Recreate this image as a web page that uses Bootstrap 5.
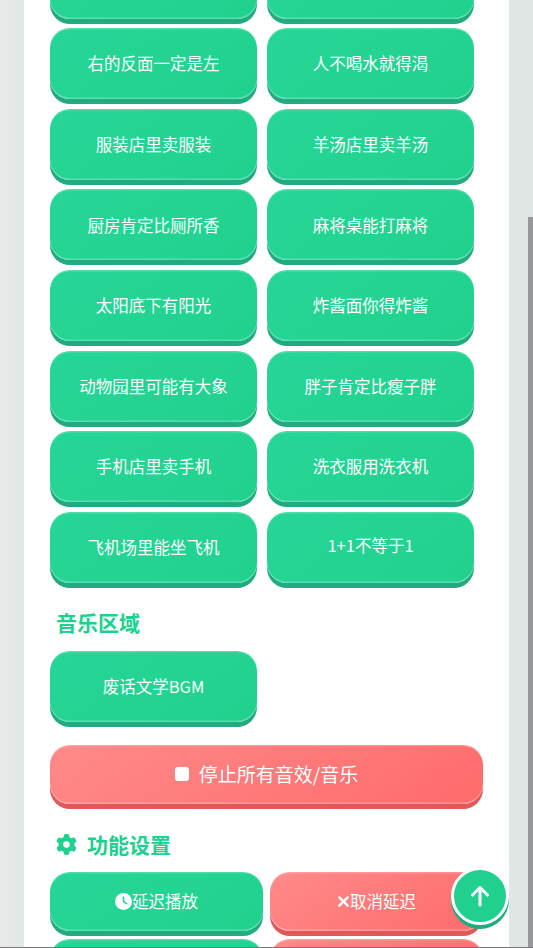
<!DOCTYPE html>
<html lang="zh">
<head>
<meta charset="utf-8">
<title>废话文学</title>
<link href="https://cdn.jsdelivr.net/npm/bootstrap@5.3.0/dist/css/bootstrap.min.css" rel="stylesheet">
<style>
html,body{height:100%;overflow:hidden}
body{background:linear-gradient(90deg,#e8eaea,#e2e8e5 24px,#e0e7e4);font-family:"Noto Sans CJK SC","Noto Sans",sans-serif;color:#fff}
.sheet{background:#fff;margin:-52.3px 24px 0 24px;padding:0 26px;width:485px;height:1100px}
.snd-grid{display:grid;grid-template-columns:207px 207px;gap:9.6px 10px;}
.press{display:flex;align-items:center;justify-content:center;height:71px;border:0;border-radius:20px;color:#fff;font-size:16.5px;padding:0;
 background:linear-gradient(145deg,#25d697,#20d18e);
 box-shadow:0 5px 0 #22aa80,inset 0 -1.5px 0 rgba(255,255,255,.25),inset 0 1.5px 0 rgba(255,255,255,.2)}
.press-up{padding:0 0 3px}
.press-red{background:linear-gradient(145deg,#ff8a8a,#ff6b6b);box-shadow:0 5px 0 #e05858,inset 0 -1.5px 0 rgba(255,255,255,.25),inset 0 1.5px 0 rgba(255,255,255,.2)}
.sect{color:#20d08f;font-size:21px;font-weight:700;line-height:28px;margin:0}
.sect-music{padding:25px 0 0 6px;margin-bottom:15px}
.stop{height:59px;width:433px;margin-top:23px;font-size:19px;gap:10px}
.stop i{display:block;width:14px;height:14px;background:#fff;border-radius:3px}
.sect-set{padding:26px 0 0 6px;margin-bottom:14px;gap:10px;display:flex;align-items:center}
.sect-set svg{position:relative;top:.5px}
.fn-grid{display:grid;grid-template-columns:213px 213px;gap:8px 7px;width:433px}
.fn{height:59px}
.top-btn{position:fixed;left:450.500px;top:866.500px;width:58px;height:58px;border-radius:50%;border:3px solid #fff;background:#20d08f;box-shadow:0 4px 0 #22aa80;padding:0;display:flex;align-items:center;justify-content:center}
.thumb{position:fixed;left:528px;top:217px;width:5px;height:731px;background:#96989b}
.rule{position:fixed;left:0;right:0;bottom:0;height:1px;background:#777}
</style>
</head>
<body>
<main class="sheet">
  <div class="snd-grid">
    <button class="press">树上有很多叶子</button><button class="press">天上有很多星星</button>
    <button class="press">右的反面一定是左</button><button class="press">人不喝水就得渴</button>
    <button class="press">服装店里卖服装</button><button class="press">羊汤店里卖羊汤</button>
    <button class="press">厨房肯定比厕所香</button><button class="press">麻将桌能打麻将</button>
    <button class="press">太阳底下有阳光</button><button class="press">炸酱面你得炸酱</button>
    <button class="press">动物园里可能有大象</button><button class="press">胖子肯定比瘦子胖</button>
    <button class="press">手机店里卖手机</button><button class="press">洗衣服用洗衣机</button>
    <button class="press">飞机场里能坐飞机</button><button class="press press-up">1+1不等于1</button>
  </div>
  <h2 class="sect sect-music">音乐区域</h2>
  <div class="snd-grid">
    <button class="press">废话文学BGM</button>
  </div>
  <button class="press press-red stop"><i></i>停止所有音效/音乐</button>
  <h2 class="sect sect-set">
    <svg width="21" height="21" viewBox="0 0 512 512" fill="#20d08f"><path d="M495.9 166.6c3.2 8.7.5 18.4-6.4 24.6l-43.3 39.4c1.1 8.3 1.7 16.8 1.7 25.4s-.6 17.1-1.7 25.4l43.3 39.4c6.9 6.2 9.6 15.9 6.4 24.6-4.4 11.9-9.7 23.3-15.8 34.3l-4.7 8.1c-6.6 11-14 21.4-22.1 31.2-5.9 7.2-15.7 9.6-24.5 6.8l-55.7-17.7c-13.4 10.3-28.2 18.9-44 25.4l-12.5 57.1c-2 9.1-9 16.3-18.2 17.8-13.8 2.3-28 3.5-42.5 3.5s-28.7-1.2-42.5-3.5c-9.2-1.5-16.2-8.7-18.2-17.8l-12.5-57.1c-15.8-6.5-30.6-15.1-44-25.4l-55.6 17.8c-8.8 2.8-18.6.3-24.5-6.8-8.1-9.8-15.5-20.2-22.1-31.2l-4.7-8.1c-6.1-11-11.4-22.4-15.8-34.3-3.2-8.7-.5-18.4 6.4-24.6l43.3-39.4c-1.1-8.4-1.7-16.9-1.7-25.5s.6-17.1 1.7-25.4l-43.3-39.4c-6.9-6.2-9.6-15.9-6.4-24.6 4.4-11.9 9.7-23.3 15.8-34.3l4.7-8.1c6.6-11 14-21.4 22.1-31.2 5.9-7.2 15.7-9.6 24.5-6.8l55.7 17.7c13.4-10.3 28.2-18.9 44-25.4l12.5-57.1c2-9.1 9-16.3 18.2-17.8C227.3 1.2 241.5 0 256 0s28.7 1.2 42.5 3.5c9.200 1.5 16.2 8.7 18.2 17.8l12.5 57.1c15.8 6.5 30.6 15.1 44 25.4l55.7-17.7c8.8-2.8 18.6-.3 24.5 6.8 8.1 9.8 15.5 20.2 22.1 31.2l4.7 8.1c6.1 11 11.4 22.4 15.8 34.3zM256 336a80 80 0 1 0 0-160 80 80 0 1 0 0 160z"/></svg>
    功能设置
  </h2>
  <div class="fn-grid">
    <button class="press fn"><svg width="17" height="17" viewBox="0 0 512 512" fill="#fff"><path d="M256 0a256 256 0 1 1 0 512A256 256 0 1 1 256 0zM232 120v136c0 8 4 15.500 10.700 20l96 64c11 7.400 25.900 4.400 33.300-6.700s4.400-25.900-6.700-33.300L280 243.200V120c0-13.300-10.700-24-24-24s-24 10.700-24 24z"/></svg>延迟播放</button>
    <button class="press press-red fn"><svg width="13" height="13" viewBox="0 0 14 14" stroke="#fff" stroke-width="2.600" stroke-linecap="round"><path d="M2.500 2.500l9 9M11.500 2.500l-9 9"/></svg>取消延迟</button>
    <button class="press fn">循环播放</button>
    <button class="press press-red fn">停止循环</button>
  </div>
</main>
<button class="top-btn" aria-label="回到顶部"><svg width="20" height="22" viewBox="0 0 20 22" fill="none" stroke="#fff" stroke-width="3" stroke-linecap="round" stroke-linejoin="round"><path d="M10 20V2.500M2.500 10l7.500-7.500 7.500 7.500"/></svg></button>
<div class="thumb"></div>
<div class="rule"></div>
<script src="https://cdn.jsdelivr.net/npm/bootstrap@5.3.0/dist/js/bootstrap.bundle.min.js"></script>
</body>
</html>
